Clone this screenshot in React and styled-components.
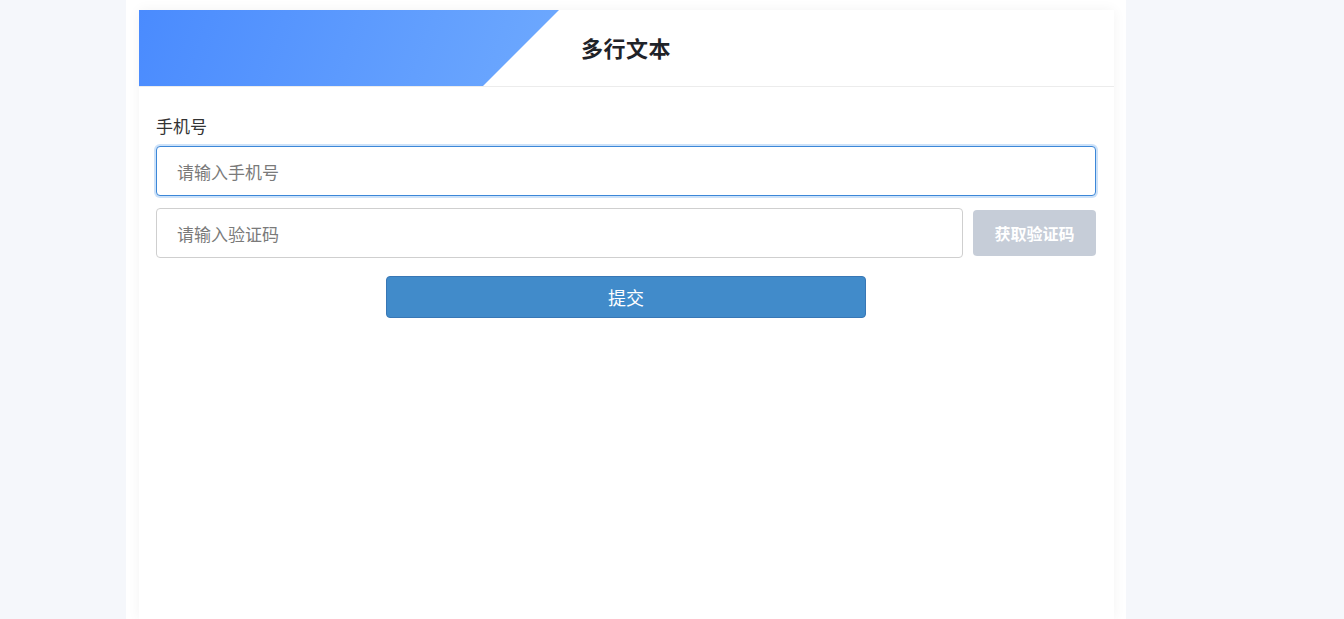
import React from "react";
import styled, { createGlobalStyle } from "styled-components";

const Global = createGlobalStyle`
  html, body { margin: 0; padding: 0; height: 100%; }
  body {
    background: #f5f7fb;
    font-family: "Microsoft YaHei", "Noto Sans CJK SC", "Liberation Sans", sans-serif;
  }
  #root { height: 100%; }
`;

const Page = styled.div`
  height: 619px;
  overflow: hidden;
  padding-left: 126px;
  box-sizing: border-box;
`;

const Container = styled.div`
  width: 1000px;
  height: 100%;
  background: #ffffff;
  padding: 10px 12px 0 13px;
  box-sizing: border-box;
`;

const Card = styled.div`
  height: 100%;
  background: #ffffff;
  box-shadow: 0 0 12px rgba(0, 0, 0, 0.05);
  display: flex;
  flex-direction: column;
`;

const Header = styled.div`
  position: relative;
  height: 76px;
  border-bottom: 1px solid #ececec;
  display: flex;
  align-items: center;
  flex-shrink: 0;
`;

const Ribbon = styled.div`
  position: absolute;
  left: 0;
  top: 0;
  width: 420px;
  height: 76px;
  background: linear-gradient(110deg, #4a8bfe 0%, #6ea9fe 100%);
  clip-path: polygon(0 0, 420px 0, 344px 76px, 0 76px);
`;

const Title = styled.h1`
  position: relative;
  margin: -2px 0 0 442px;
  font-size: 22px;
  font-weight: 700;
  color: #1f2329;
  letter-spacing: 0.5px;
`;

const Body = styled.div`
  padding: 27px 18px 0 17px;
  display: flex;
  flex-direction: column;
`;

const Label = styled.label`
  font-size: 17px;
  color: #333;
  line-height: 24px;
  margin-bottom: 8px;
`;

const Input = styled.input`
  height: 50px;
  box-sizing: border-box;
  border: 1px solid ${(p) => (p.$focused ? "#3c87d8" : "#cfcfcf")};
  border-radius: 4px;
  padding: 0 20px;
  font-size: 17px;
  font-family: inherit;
  color: #333;
  outline: none;
  box-shadow: ${(p) => (p.$focused ? "0 0 0 2px rgba(90, 160, 235, 0.3)" : "none")};
  flex: ${(p) => (p.$grow ? "1 1 auto" : "0 0 auto")};
  min-width: 0;
  &::placeholder { color: #7a7a7a; }
`;

const Row = styled.div`
  display: flex;
  align-items: center;
  gap: 10px;
  margin-top: 12px;
`;

const CodeButton = styled.button`
  width: 123px;
  height: 46px;
  border: none;
  border-radius: 4px;
  background: #c6cdd8;
  color: #ffffff;
  font-family: inherit;
  font-size: 16px;
  font-weight: 600;
  flex-shrink: 0;
`;

const Submit = styled.button`
  align-self: center;
  margin-top: 18px;
  width: 480px;
  height: 42px;
  border: 1px solid #3877b5;
  border-radius: 4px;
  background: #418bca;
  color: #ffffff;
  font-family: inherit;
  font-size: 18px;
`;

export default function App() {
  return (
    <>
      <Global />
      <Page>
        <Container>
          <Card>
            <Header>
              <Ribbon />
              <Title>多行文本</Title>
            </Header>
            <Body>
              <Label>手机号</Label>
              <Input $focused placeholder="请输入手机号" />
              <Row>
                <Input $grow placeholder="请输入验证码" />
                <CodeButton>获取验证码</CodeButton>
              </Row>
              <Submit>提交</Submit>
            </Body>
          </Card>
        </Container>
      </Page>
    </>
  );
}
